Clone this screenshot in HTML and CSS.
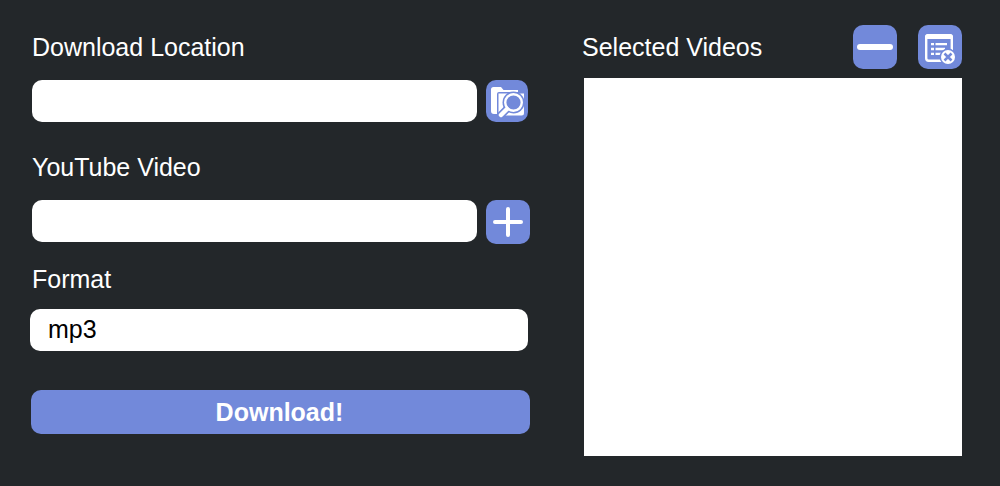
FILE: index.html
```html
<!DOCTYPE html>
<html lang="en">
<head>
<meta charset="utf-8">
<meta name="viewport" content="width=device-width, initial-scale=1">
<title>Video Downloader</title>
<link rel="stylesheet" href="styles.css">
</head>
<body>
<main class="app">
  <form class="form">
    <div class="field">
      <label class="label" for="location">Download Location</label>
      <div class="row">
        <input class="control" id="location" type="text">
        <button class="icon-button icon-button-small" type="button" aria-label="Browse folders">
          <svg class="icon" viewBox="0 0 42 42" aria-hidden="true">
            <path d="M5 9.500a2.500 2.500 0 0 1 2.500-2.500h7.500l2.500 3h14.500v2H13a2 2 0 0 0-2 2v20H8a3 3 0 0 1-3-3z" fill="#fff"/>
            <path d="M12.500 13.500H38v19.500a2.500 2.500 0 0 1-2.500 2.500H12.500z" fill="#fff"/>
            <path d="M21 29l-6 6" stroke="#7289da" stroke-width="7.500" stroke-linecap="round"/>
            <circle cx="27.500" cy="22.500" r="11" fill="#7289da"/>
            <circle cx="27.500" cy="22.500" r="8.300" stroke="#fff" stroke-width="2.400" fill="none"/>
            <path d="M21 29l-6 6" stroke="#fff" stroke-width="4.500" stroke-linecap="round"/>
          </svg>
        </button>
      </div>
    </div>
    <div class="field">
      <label class="label" for="video">YouTube Video</label>
      <div class="row">
        <input class="control" id="video" type="text">
        <button class="icon-button" type="button" aria-label="Add video">
          <svg class="icon" viewBox="0 0 44 44" aria-hidden="true">
            <path d="M22 9v26M9 22h26" stroke="#fff" stroke-width="4" stroke-linecap="round"/>
          </svg>
        </button>
      </div>
    </div>
    <div class="field field-format">
      <label class="label" for="format">Format</label>
      <select class="control format" id="format">
        <option selected>mp3</option>
        <option>mp4</option>
      </select>
    </div>
    <button class="download" type="submit">Download!</button>
  </form>
  <section class="selected">
    <header class="toolbar">
      <label class="label title" for="videos">Selected Videos</label>
      <button class="icon-button" type="button" aria-label="Remove video">
        <svg class="icon" viewBox="0 0 44 44" aria-hidden="true">
          <path d="M7 22h30" stroke="#fff" stroke-width="6" stroke-linecap="round"/>
        </svg>
      </button>
      <button class="icon-button" type="button" aria-label="Clear list">
        <svg class="icon" viewBox="0 0 44 44" fill="none" aria-hidden="true">
          <rect x="8.200" y="10.200" width="25.600" height="25.600" rx="2.500" stroke="#fff" stroke-width="2.400"/>
          <path d="M7 14v-2a3 3 0 0 1 3-3h22a3 3 0 0 1 3 3v2z" fill="#fff"/>
          <path d="M13 19.200h3M13 24h3M13 28.800h3M17.500 19.200H29M17.500 24H27M17.500 28.800H23" stroke="#fff" stroke-width="2.300"/>
          <circle cx="30" cy="32" r="8.500" fill="#7289da"/>
          <circle cx="30" cy="32" r="7" fill="#fff"/>
          <path d="M26.500 28.500l7 7M33.500 28.500l-7 7" stroke="#7289da" stroke-width="2.500"/>
        </svg>
      </button>
    </header>
    <select class="list" id="videos" multiple></select>
  </section>
</main>
</body>
</html>
```

FILE: styles.css
```css
* {
  box-sizing: border-box;
}

body {
  margin: 0;
  background: #23272a;
  color: #fff;
  font: 25px/28px "Liberation Sans", Arial, sans-serif;
}

.app {
  display: grid;
  grid-template-columns: minmax(0, 500fr) minmax(0, 380fr);
  column-gap: 52px;
  min-height: 100vh;
  padding: 25px 38px 30px 30px;
}

.form {
  display: flex;
  flex-direction: column;
  padding-top: 8px;
}

.field {
  display: flex;
  flex-direction: column;
  gap: 19px;
  margin-bottom: 31px;
  padding-left: 2px;
}

.field + .field {
  margin-bottom: 21px;
}

.field.field-format {
  gap: 16px;
  margin-bottom: 39px;
  padding: 0 2px 0 0;
}

.field-format .label {
  padding-left: 2px;
}

.row {
  display: flex;
  align-items: flex-start;
  gap: 9px;
}

.control {
  flex: 1;
  min-width: 0;
  height: 42px;
  padding: 0 16px;
  border: 0;
  border-radius: 10px;
  background: #fff;
  color: #000;
  font: inherit;
}

.format {
  flex: none;
  width: 100%;
  padding: 0 18px 3px;
  appearance: none;
}

.icon-button {
  flex: none;
  width: 44px;
  height: 44px;
  padding: 0;
  border: 0;
  border-radius: 10px;
  background: #7289da;
}

.icon-button-small {
  width: 42px;
  height: 42px;
  margin-right: 2px;
}

.icon {
  display: block;
  width: 100%;
  height: 100%;
}

.download {
  height: 44px;
  margin-left: 1px;
  padding: 0 2px 0 0;
  border: 0;
  border-radius: 10px;
  background: #7289da;
  color: #fff;
  font: inherit;
  font-weight: bold;
}

.selected {
  display: flex;
  flex-direction: column;
  gap: 9px;
}

.toolbar {
  display: flex;
  align-items: center;
  gap: 21px;
}

.title {
  flex: 1;
}

.list {
  flex: 1;
  min-height: 378px;
  margin: 0 0 0 2px;
  padding: 8px;
  border: 0;
  border-radius: 0;
  background: #fff;
  color: #000;
  font: inherit;
}
```
